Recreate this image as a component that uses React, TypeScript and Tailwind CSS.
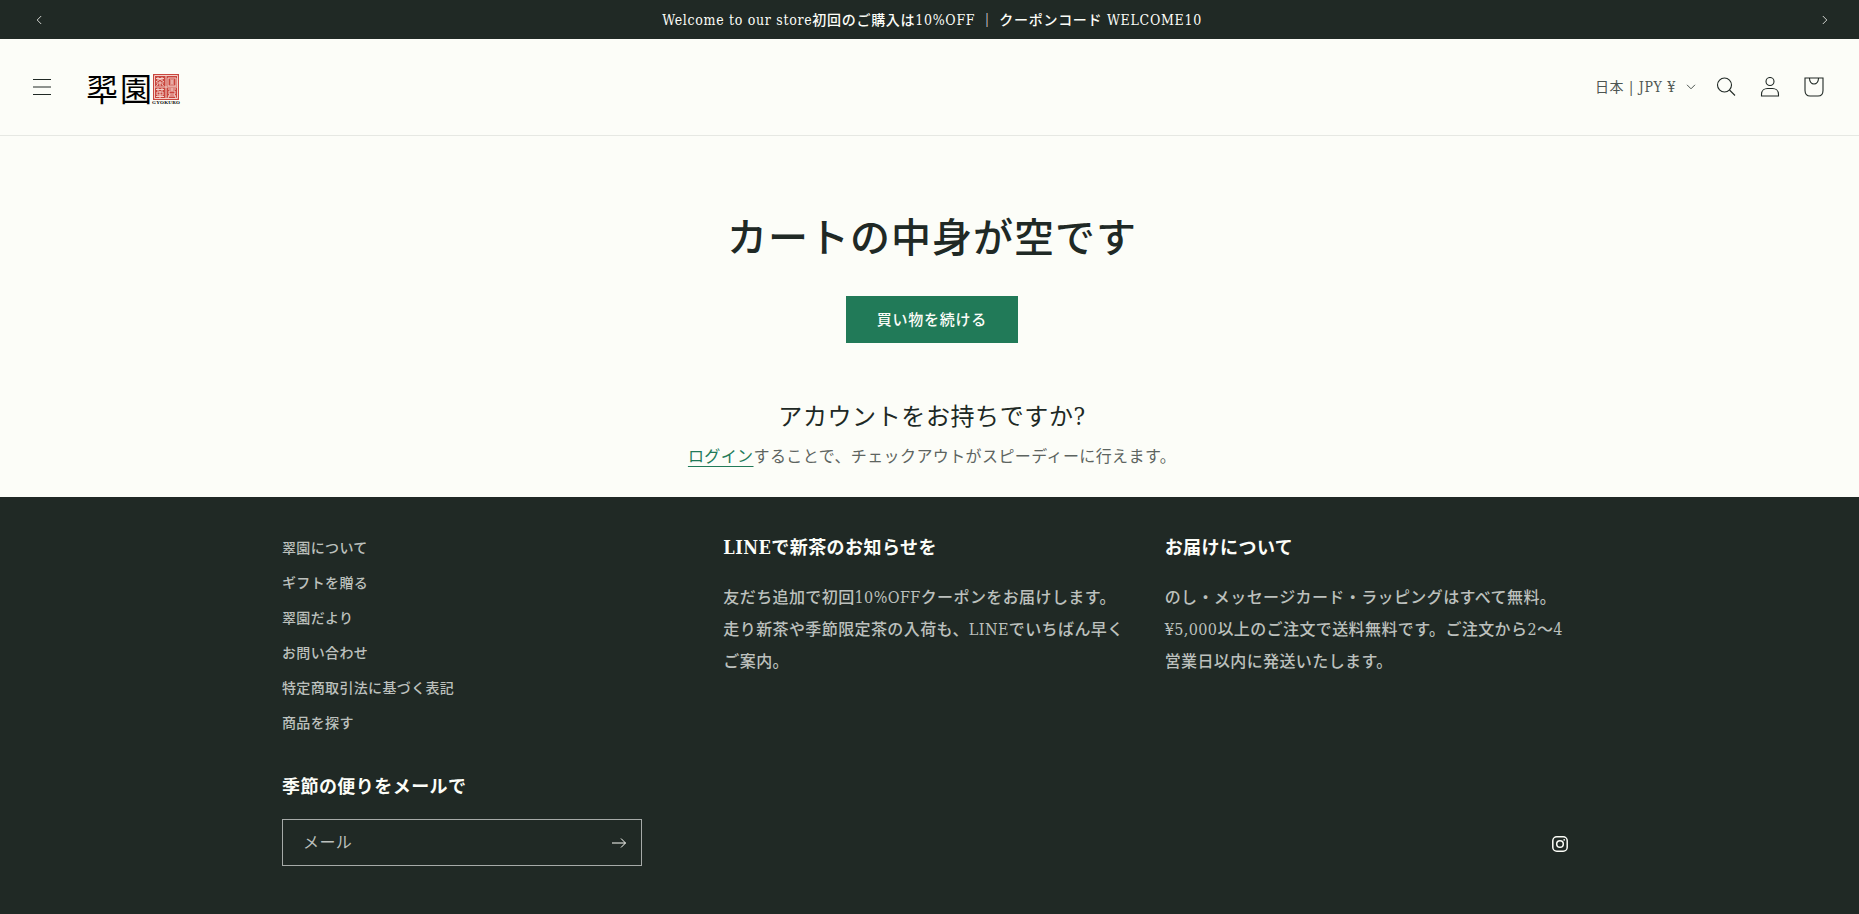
import type { ReactNode } from 'react'

const menuLinks = [
  '翠園について',
  'ギフトを贈る',
  '翠園だより',
  'お問い合わせ',
  '特定商取引法に基づく表記',
  '商品を探す',
]

const infoBlocks = [
  {
    title: 'LINEで新茶のお知らせを',
    body: '友だち追加で初回10%OFFクーポンをお届けします。\n走り新茶や季節限定茶の入荷も、LINEでいちばん早く\nご案内。',
  },
  {
    title: 'お届けについて',
    body: 'のし・メッセージカード・ラッピングはすべて無料。\n¥5,000以上のご注文で送料無料です。ご注文から2〜4\n営業日以内に発送いたします。',
  },
]

function IconButton({ label, children }: { label: string; children: ReactNode }) {
  return (
    <button type="button" aria-label={label} className="flex size-11 items-center justify-center">
      {children}
    </button>
  )
}

function Chevron({ className }: { className: string }) {
  return (
    <svg viewBox="0 0 10 6" className={className} fill="none" stroke="currentColor">
      <path d="M1 .8l4 4 4-4" />
    </svg>
  )
}

function Logo() {
  return (
    <a href="#" aria-label="翠園 GYOKURO" className="flex items-center pt-[5px] text-black">
      <span className="flex gap-[2px] text-[32px] leading-8">
        <span>翆</span>
        <span>園</span>
      </span>
      <span className="flex flex-col items-center">
        <svg viewBox="0 0 26 26" className="size-[26px]" fill="none" stroke="#f3cfc8" strokeWidth="1">
          <rect width="26" height="26" fill="#c9463e" stroke="none" />
          <path d="M1.500 1.500h23v23h-23zM13 2v22M2 13h22" />
          <path d="M3 4.500h8M5 3v3M9 3v3M7 5l-4 3M7 5l4 3M3.500 9h7M7 7v5M5 10l-1.500 2M9 10l1.500 2" />
          <path d="M15 4h8v8h-8zM17 6h4M17 8h4M17 10h4M19 6v4" />
          <path d="M3 15.500h8M5 14v3M9 14v3M4 18h6v3H4zM7 17v7M3 22.500h8" />
          <path d="M15 15h8M19 14v3M16 17h6v3h-6zM15 22h8M17 20l-2 4M21 20l2 4" />
        </svg>
        <span className="font-['Liberation_Serif',serif] text-[5px] leading-[6px] font-bold tracking-wider">GYOKURO</span>
      </span>
    </a>
  )
}

function AnnouncementBar() {
  return (
    <div className="flex h-[39px] items-center justify-between bg-[#202925] pr-3 pl-[17px] text-[#fcfdf8]">
      <IconButton label="前へ">
        <Chevron className="w-[10px] rotate-90 opacity-80" />
      </IconButton>
      <p className="text-sm leading-5 font-medium tracking-wider">
        Welcome to our store初回のご購入は10%OFF ｜ クーポンコード WELCOME10
      </p>
      <IconButton label="次へ">
        <Chevron className="w-[10px] -rotate-90 opacity-80" />
      </IconButton>
    </div>
  )
}

function Header() {
  return (
    <header className="flex h-[97px] items-center justify-between border-b border-[#e6e8e3] pr-[23px] pl-5">
      <div className="flex items-center gap-[22px]">
        <IconButton label="メニュー">
          <svg viewBox="0 0 20 18" className="w-5" fill="none" stroke="currentColor">
            <path d="M1 1.500h18M1 9h18M1 16.500h18" />
          </svg>
        </IconButton>
        <Logo />
      </div>
      <div className="flex items-center">
        <button type="button" className="flex items-center gap-[10px] pr-2 text-sm tracking-wider text-[#4d5551]">
          日本 | JPY ¥
          <Chevron className="w-[10px]" />
        </button>
        <IconButton label="検索">
          <svg viewBox="0 0 20 20" className="size-5" fill="none" stroke="currentColor" strokeWidth="1.1">
            <circle cx="8.500" cy="8" r="7" />
            <path d="M13.500 13l5.500 5.500" />
          </svg>
        </IconButton>
        <IconButton label="ログイン">
          <svg viewBox="0 0 20 20" className="size-5" fill="none" stroke="currentColor" strokeWidth="1.1">
            <circle cx="10" cy="4.500" r="4" />
            <path d="M1.500 19v-1.500c0-4 3-6 6-6h5c3 0 6 2 6 6V19z" />
          </svg>
        </IconButton>
        <IconButton label="カート">
          <svg viewBox="0 0 20 20" className="size-5" fill="none" stroke="currentColor" strokeWidth="1.1">
            <path d="M1 1h18v12.500c0 3.500-2 5.500-5 5.500H6c-3 0-5-2-5-5.500z" />
            <path d="M5.500 1c0 3.500 2 6 4.500 6s4.500-2.500 4.500-6" />
          </svg>
        </IconButton>
      </div>
    </header>
  )
}

function EmptyCart() {
  return (
    <main className="flex flex-col items-center pt-[76px] pb-[26px] pl-[5px] text-center">
      <h1 className="text-[40px] leading-[52px] font-medium tracking-wide">カートの中身が空です</h1>
      <a href="#" className="mt-8 bg-[#217a58] px-[31px] pt-[13px] pb-[11px] text-[15px] leading-[23px] font-medium tracking-wider text-[#fcfdf8]">
        買い物を続ける
      </a>
      <h2 className="mt-[58px] text-2xl leading-8 tracking-wide">アカウントをお持ちですか?</h2>
      <p className="mt-[10px] text-base leading-7 tracking-wide text-[#5d6460]">
        <a href="#" className="text-[#217a58] underline underline-offset-4">ログイン</a>
        することで、チェックアウトがスピーディーに行えます。
      </p>
    </main>
  )
}

function Footer() {
  return (
    <footer className="bg-[#202925] pl-[5px] text-[#fcfdf8]">
      <div className="mx-auto max-w-[1300px] pt-[34px] pb-[50px]">
        <div className="grid grid-cols-3 gap-6">
          <ul className="text-sm font-medium tracking-wide text-[#bcc0bd]">
            {menuLinks.map((link) => (
              <li key={link}>
                <a href="#" className="block py-[6px] leading-[23px]">{link}</a>
              </li>
            ))}
          </ul>
          {infoBlocks.map((block) => (
            <div key={block.title} className="pt-[3px]">
              <h2 className="text-lg leading-7 font-bold tracking-wide">{block.title}</h2>
              <p className="mt-5 text-base leading-8 font-medium tracking-wide whitespace-pre-line text-[#bcc0bd]">
                {block.body}
              </p>
            </div>
          ))}
        </div>
        <div className="mt-8 flex items-end justify-between">
          <form className="w-[360px]" onSubmit={(e) => e.preventDefault()}>
            <label htmlFor="email" className="block text-lg leading-7 font-bold tracking-wide">季節の便りをメールで</label>
            <div className="mt-[18px] flex h-[47px] items-center border border-[#a6aaa8]">
              <input
                id="email"
                type="email"
                placeholder="メール"
                className="min-w-0 flex-1 pl-5 text-base tracking-wide outline-none placeholder:text-[#bcc0bd]"
              />
              <IconButton label="登録">
                <svg viewBox="0 0 14 10" className="w-[14px]" fill="none" stroke="currentColor" strokeWidth="1">
                  <path d="M0 5h13.500M9 .5L13.500 5 9 9.500" />
                </svg>
              </IconButton>
            </div>
          </form>
          <a href="#" aria-label="Instagram" className="flex size-11 items-center justify-center">
            <svg viewBox="0 0 16 16" className="size-4" fill="none" stroke="currentColor" strokeWidth="1.500">
              <rect x=".8" y=".8" width="14.400" height="14.400" rx="4" />
              <circle cx="8" cy="8" r="3.300" />
              <circle cx="12.200" cy="3.800" r=".9" fill="currentColor" stroke="none" />
            </svg>
          </a>
        </div>
      </div>
      <div className="h-px bg-[#3a423e]" />
    </footer>
  )
}

export default function App() {
  return (
    <div className="min-h-screen bg-[#fcfdf8] font-['DejaVu_Serif_Condensed','DejaVu_Serif','Noto_Sans_CJK_JP',serif] text-[#202925]">
      <AnnouncementBar />
      <Header />
      <EmptyCart />
      <Footer />
    </div>
  )
}
